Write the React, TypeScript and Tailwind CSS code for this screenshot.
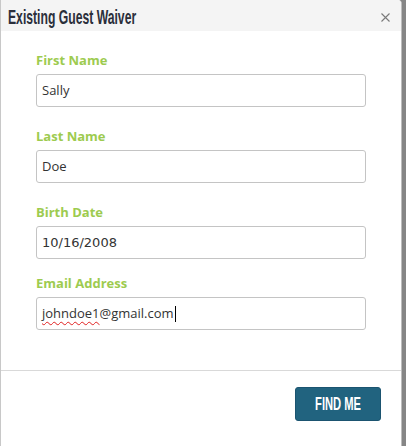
import React from "react";

function Field({ label, children, mt }: { label: string; children: React.ReactNode; mt: string }) {
  return (
    <div className={mt}>
      <div className="text-[13px] leading-[18px] font-bold text-[#9dcb4f] mb-[5px]" style={{ fontFamily: '"Open Sans", sans-serif' }}>
        {label}
      </div>
      <div className="h-[33px] w-[330px] border border-[#c4c4c4] rounded-[3px] bg-white flex items-center pl-[5px] text-[#333]">
        {children}
      </div>
    </div>
  );
}

export default function App() {
  return (
    <div className="w-[406px] h-[446px] bg-[#868686] flex">
      <div className="w-[402px] h-full bg-white border-l border-[#c8c8c8] border-r border-r-[#bdbdbd] rounded-tr-[4px] flex flex-col overflow-hidden">
        <div className="h-[31px] bg-[#f4f4f4] flex items-center justify-between pl-[7px] pr-[11px] shrink-0">
          <span
            className="inline-block font-bold text-[21px] leading-[21px] text-[#2b2f3b] origin-left scale-x-[0.58] whitespace-nowrap pt-[1px]"
            style={{ fontFamily: '"Liberation Sans", sans-serif' }}
          >
            Existing Guest Waiver
          </span>
          <svg width="9" height="9" viewBox="0 0 9 9" className="mt-[3px]">
            <path d="M0.5 0.5 L8.5 8.5 M8.5 0.5 L0.5 8.5" stroke="#7a7a7a" strokeWidth="1.1" />
          </svg>
        </div>
        <div className="pl-[35px] pt-[20px] h-[339px] shrink-0" style={{ fontFamily: '"Open Sans", sans-serif' }}>
          <Field label="First Name" mt="">
            <span className="text-[13px]">Sally</span>
          </Field>
          <Field label="Last Name" mt="mt-[20px]">
            <span className="text-[13px]">Doe</span>
          </Field>
          <Field label="Birth Date" mt="mt-[20px]">
            <span className="text-[#333]" style={{ fontFamily: '"DejaVu Sans", sans-serif', fontSize: "13px" }}>10/16/2008</span>
          </Field>
          <Field label="Email Address" mt="mt-[15px]">
            <span className="text-[13px] flex items-center">
              <span className="underline decoration-wavy decoration-[#e02020] decoration-1 underline-offset-[3px]">johndoe1</span>
              @gmail.com
              <span className="inline-block w-[1px] h-[16px] bg-black ml-[1px]" />
            </span>
          </Field>
        </div>
        <div className="border-t border-[#d9d9d9] flex justify-end pt-[16px] pr-[20px]">
          <div className="w-[86px] h-[34px] bg-[#21637f] rounded-[3px] border border-[#1b5470] flex items-center justify-center">
            <span
              className="inline-block text-white font-bold text-[18px] leading-[18px] scale-x-[0.62] whitespace-nowrap"
              style={{ fontFamily: '"Liberation Sans", sans-serif' }}
            >
              FIND ME
            </span>
          </div>
        </div>
      </div>
    </div>
  );
}
